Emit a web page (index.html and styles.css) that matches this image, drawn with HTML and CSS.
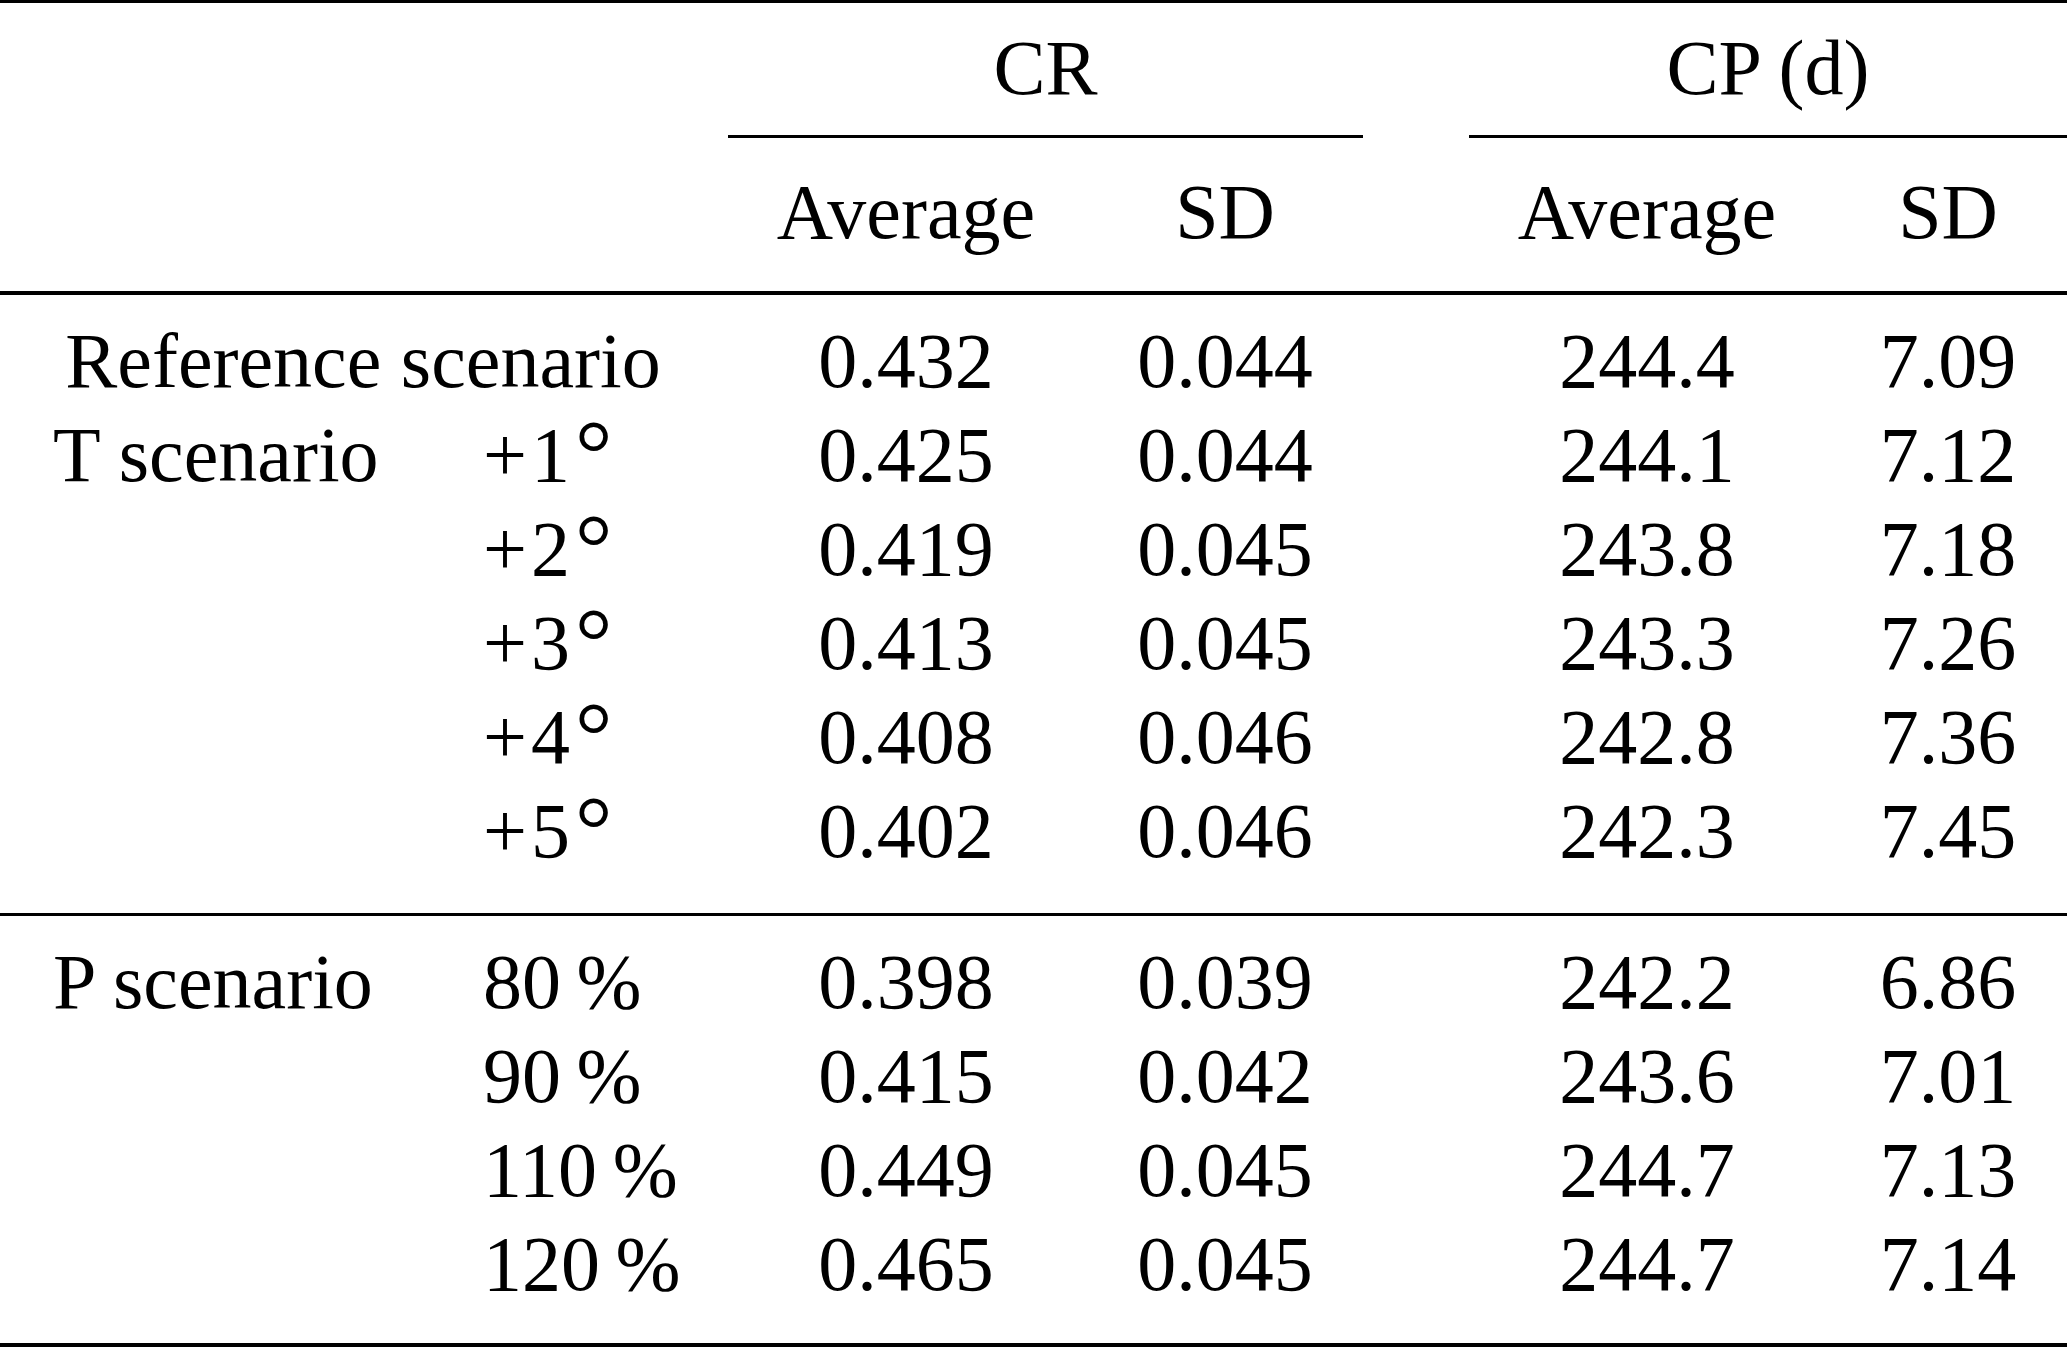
FILE: index.html
```html
<!DOCTYPE html>
<html lang="en">
<head>
<meta charset="utf-8">
<title>CR and CP scenarios</title>
<link rel="stylesheet" href="styles.css">
</head>
<body>
<div class="table">
  <div class="rule rule-top"></div>
  <div class="head">
    <div class="row row-groups">
      <div class="group group-cr">CR</div>
      <div class="group group-cp">CP (d)</div>
    </div>
    <div class="row row-sub">
      <div class="cell c3">Average</div>
      <div class="cell c4">SD</div>
      <div class="cell c5">Average</div>
      <div class="cell c6">SD</div>
    </div>
  </div>
  <div class="rule rule-head"></div>
  <div class="section section-t">
    <div class="row">
      <div class="cell c12">Reference scenario</div>
      <div class="cell c3">0.432</div><div class="cell c4">0.044</div>
      <div class="cell c5">244.4</div><div class="cell c6">7.09</div>
    </div>
    <div class="row">
      <div class="cell c1">T scenario</div><div class="cell c2"><span class="plus">+</span>1<span class="deg">°</span></div>
      <div class="cell c3">0.425</div><div class="cell c4">0.044</div>
      <div class="cell c5">244.1</div><div class="cell c6">7.12</div>
    </div>
    <div class="row">
      <div class="cell c2"><span class="plus">+</span>2<span class="deg">°</span></div>
      <div class="cell c3">0.419</div><div class="cell c4">0.045</div>
      <div class="cell c5">243.8</div><div class="cell c6">7.18</div>
    </div>
    <div class="row">
      <div class="cell c2"><span class="plus">+</span>3<span class="deg">°</span></div>
      <div class="cell c3">0.413</div><div class="cell c4">0.045</div>
      <div class="cell c5">243.3</div><div class="cell c6">7.26</div>
    </div>
    <div class="row">
      <div class="cell c2"><span class="plus">+</span>4<span class="deg">°</span></div>
      <div class="cell c3">0.408</div><div class="cell c4">0.046</div>
      <div class="cell c5">242.8</div><div class="cell c6">7.36</div>
    </div>
    <div class="row">
      <div class="cell c2"><span class="plus">+</span>5<span class="deg">°</span></div>
      <div class="cell c3">0.402</div><div class="cell c4">0.046</div>
      <div class="cell c5">242.3</div><div class="cell c6">7.45</div>
    </div>
  </div>
  <div class="rule rule-mid"></div>
  <div class="section section-p">
    <div class="row">
      <div class="cell c1">P scenario</div><div class="cell c2">80&#8201;%</div>
      <div class="cell c3">0.398</div><div class="cell c4">0.039</div>
      <div class="cell c5">242.2</div><div class="cell c6">6.86</div>
    </div>
    <div class="row">
      <div class="cell c2">90&#8201;%</div>
      <div class="cell c3">0.415</div><div class="cell c4">0.042</div>
      <div class="cell c5">243.6</div><div class="cell c6">7.01</div>
    </div>
    <div class="row">
      <div class="cell c2">110&#8201;%</div>
      <div class="cell c3">0.449</div><div class="cell c4">0.045</div>
      <div class="cell c5">244.7</div><div class="cell c6">7.13</div>
    </div>
    <div class="row">
      <div class="cell c2">120&#8201;%</div>
      <div class="cell c3">0.465</div><div class="cell c4">0.045</div>
      <div class="cell c5">244.7</div><div class="cell c6">7.14</div>
    </div>
  </div>
  <div class="rule rule-bottom"></div>
</div>
</body>
</html>
```

FILE: styles.css
```css
html, body {
  margin: 0;
  padding: 0;
  background: #fff;
}

body {
  font-family: "Liberation Serif", "Times New Roman", serif;
  font-size: 78px;
  color: #000;
}

.table {
  width: 2067px;
  display: flex;
  flex-direction: column;
}

.rule {
  background: #000;
  width: 100%;
}

.rule-top { height: 3px; }
.rule-head { height: 4px; }
.rule-mid { height: 3px; }
.rule-bottom { height: 4px; }

.row {
  display: grid;
  grid-template-columns: 440px 260px 412px 226px 78px 462px 140px 49px;
  line-height: 94px;
  height: 94px;
  white-space: nowrap;
}

.row-groups {
  height: auto;
}

.group {
  padding-top: 18px;
  padding-bottom: 20px;
  border-bottom: 3px solid #000;
  text-align: center;
}

.group-cr {
  grid-column: 3 / 6;
  margin-left: 28px;
  margin-right: 53px;
}

.group-cp {
  grid-column: 6 / 9;
  margin-left: 53px;
}

.row-sub {
  margin-top: 27px;
  margin-bottom: 32px;
}

.section-t {
  padding-top: 19px;
  padding-bottom: 35px;
}

.section-p {
  padding-top: 19px;
  padding-bottom: 32px;
}

.cell {
  line-height: 94px;
}

.plus {
  margin-right: 4px;
}

.deg {
  display: inline-block;
  margin-left: 5px;
  font-size: 1.2em;
  line-height: 0;
  transform: translateY(4px);
}

.c1 { grid-column: 1; padding-left: 53px; }
.c2 { grid-column: 2; padding-left: 43px; }
.c12 { grid-column: 1 / 3; text-align: center; padding-left: 26px; }
.c3 { grid-column: 3; text-align: center; }
.c4 { grid-column: 4; text-align: center; }
.c5 { grid-column: 6; text-align: center; }
.c6 { grid-column: 7; text-align: center; }
```
